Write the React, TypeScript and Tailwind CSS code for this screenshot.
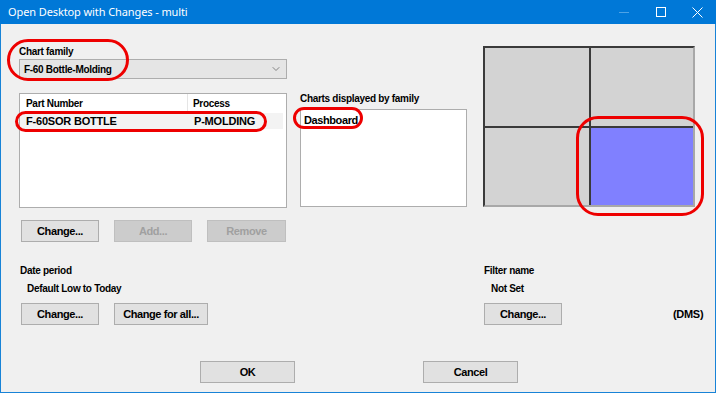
import { ChevronDown } from 'lucide-react';

const font = "font-['Liberation_Sans',Arial,sans-serif]";
const label = 'text-[10px] font-bold leading-[13px] tracking-[-0.3px]';

function WinButton({
  text,
  width,
  disabled,
}: {
  text: string;
  width: string;
  disabled?: boolean;
}) {
  return (
    <button
      className={`${width} h-[22px] flex items-center justify-center text-[11px] font-bold tracking-[-0.4px] border ${
        disabled
          ? 'bg-[#cccccc] border-[#bfbfbf] text-[#a0a0a0]'
          : 'bg-[#e1e1e1] border-[#adadad] text-black'
      }`}
    >
      {text}
    </button>
  );
}

function Ring({ className }: { className: string }) {
  return <div className={`absolute border-[3px] border-[#ee0000] pointer-events-none ${className}`} />;
}

export default function App() {
  return (
    <div className={`relative w-[716px] h-[393px] flex flex-col bg-[#f0f0f0] border-x border-b border-[#1883d7] ${font} text-black`}>
      {/* Title bar */}
      <div className="h-[24px] shrink-0 -mx-px bg-[#0078d7] flex items-center text-white">
        <span className="ml-[8px] text-[11px] font-['Noto_Sans',sans-serif] tracking-[-0.1px]">
          Open Desktop with Changes - multi
        </span>
        <div className="ml-auto flex items-center h-full">
          <div className="w-[37px] flex justify-center">
            <div className="w-[10px] h-px bg-[#4ea3e6]" />
          </div>
          <div className="w-[37px] flex justify-center">
            <div className="w-[10px] h-[10px] border border-white" />
          </div>
          <div className="w-[37px] flex justify-center">
            <svg width="11" height="11" viewBox="0 0 11 11">
              <path d="M0.5 0.5 L10.5 10.5 M10.5 0.5 L0.5 10.5" stroke="white" strokeWidth="1" />
            </svg>
          </div>
        </div>
      </div>

      {/* Body */}
      <div className="flex flex-col pl-[18px]">
        <div className="flex">
          {/* Left column */}
          <div className="w-[268px] flex flex-col pt-[21px]">
            <div className={label}>Chart family</div>
            <div className="mt-[1px] h-[20px] bg-[#e5e5e5] border border-[#adadad] flex items-center pl-[4px] pr-[4px]">
              <span className={label}>F-60 Bottle-Molding</span>
              <ChevronDown className="ml-auto text-[#606060]" size={12} strokeWidth={1.5} />
            </div>
            <div className="mt-[14px] h-[115px] bg-white border border-[#adadad] flex flex-col">
              <div className="h-[19px] flex">
                <div className={`w-[168px] pl-[6px] flex items-center border-r border-[#e5e5e5] ${label}`}>Part Number</div>
                <div className={`pl-[5px] flex items-center ${label}`}>Process</div>
              </div>
              <div className="h-[16px] mr-[3px] bg-[#f3f3f3] flex items-center text-[11px] font-bold tracking-[-0.2px]">
                <div className="w-[168px] pl-[6px]">F-60SOR BOTTLE</div>
                <div className="pl-[6px]">P-MOLDING</div>
              </div>
            </div>
          </div>

          {/* Middle column */}
          <div className="ml-[13px] w-[167px] flex flex-col pt-[68px]">
            <div className={label}>Charts displayed by family</div>
            <div className="mt-[4px] h-[98px] bg-white border border-[#adadad] pl-[3px] pt-[2px]">
              <div className="text-[11px] font-bold tracking-[-0.4px]">Dashboard</div>
            </div>
          </div>

          {/* Layout preview */}
          <div className="ml-[16px] mt-[22px] w-[212px] h-[161px] border-t-2 border-l-2 border-[#3a3a3a] border-r-2 border-b-2 border-r-[#a8a8a8] border-b-[#a8a8a8] bg-[#3a3a3a] grid grid-cols-[104px_1fr] grid-rows-[78px_1fr] gap-[2px]">
            <div className="bg-[#d3d3d3]" />
            <div className="bg-[#d3d3d3]" />
            <div className="bg-[#d3d3d3]" />
            <div className="bg-[#8080ff]" />
          </div>
        </div>

        {/* List buttons */}
        <div className="flex gap-[15px] mt-[12px] pl-[2px]">
          <WinButton text="Change..." width="w-[78px]" />
          <WinButton text="Add..." width="w-[78px]" disabled />
          <WinButton text="Remove" width="w-[79px]" disabled />
        </div>

        {/* Date / filter */}
        <div className="flex mt-[22px]">
          <div className="w-[465px] flex flex-col">
            <div className={`${label} pl-[1px]`}>Date period</div>
            <div className={`${label} mt-[5px] pl-[8px]`}>Default Low to Today</div>
            <div className="flex gap-[15px] mt-[8px] pl-[2px]">
              <WinButton text="Change..." width="w-[78px]" />
              <WinButton text="Change for all..." width="w-[94px]" />
            </div>
          </div>
          <div className="flex flex-col">
            <div className={label}>Filter name</div>
            <div className={`${label} mt-[5px] pl-[7px]`}>Not Set</div>
            <div className="flex items-center mt-[8px]">
              <WinButton text="Change..." width="w-[78px]" />
              <span className="ml-[111px] text-[11px] font-bold tracking-[-0.3px]">(DMS)</span>
            </div>
          </div>
        </div>

        {/* OK / Cancel */}
        <div className="flex mt-[36px] pl-[181px] gap-[128px]">
          <WinButton text="OK" width="w-[95px]" />
          <WinButton text="Cancel" width="w-[95px]" />
        </div>
      </div>

      {/* Annotations */}
      <Ring className="left-[6px] top-[39px] w-[122px] h-[42px] rounded-full" />
      <Ring className="left-[14px] top-[111px] w-[252px] h-[21px] rounded-full" />
      <Ring className="left-[292px] top-[107px] w-[70px] h-[22px] rounded-full" />
      <Ring className="left-[575px] top-[116px] w-[128px] h-[100px] rounded-[22px]" />
    </div>
  );
}
